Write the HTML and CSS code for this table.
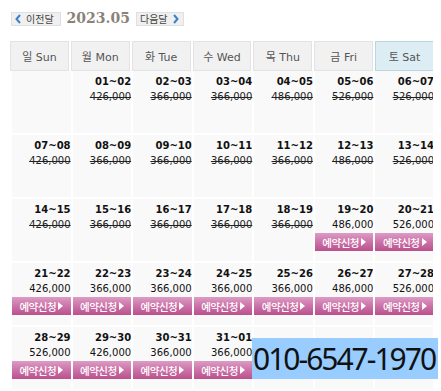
FILE: index.html
```html
<!DOCTYPE html>
<html lang="ko">
<head>
    <meta charset="UTF-8">
    <title>예약 달력</title>
    <link rel="stylesheet" href="styles.css">
</head>
<body>
    <div class="month-nav">
        <button class="nav-btn"><svg class="chev" viewBox="0 0 6 10" width="6" height="10"><polyline points="5,1 1.5,5 5,9"/></svg>이전달</button>
        <h2 class="month-title">2023.05</h2>
        <button class="nav-btn">다음달<svg class="chev" viewBox="0 0 6 10" width="6" height="10"><polyline points="1,1 4.5,5 1,9"/></svg></button>
    </div>

    <div class="week-head">
        <div class="day-name">일 Sun</div>
        <div class="day-name">월 Mon</div>
        <div class="day-name">화 Tue</div>
        <div class="day-name">수 Wed</div>
        <div class="day-name">목 Thu</div>
        <div class="day-name">금 Fri</div>
        <div class="day-name sat">토 Sat</div>
    </div>

    <div class="month-grid">
        <!-- week 1 -->
        <div class="day"></div>
        <div class="day"><span class="range">01~02</span><span class="price sold">426,000</span></div>
        <div class="day"><span class="range">02~03</span><span class="price sold">366,000</span></div>
        <div class="day"><span class="range">03~04</span><span class="price sold">366,000</span></div>
        <div class="day"><span class="range">04~05</span><span class="price sold">486,000</span></div>
        <div class="day"><span class="range">05~06</span><span class="price sold">526,000</span></div>
        <div class="day"><span class="range">06~07</span><span class="price sold">526,000</span></div>
        <!-- week 2 -->
        <div class="day"><span class="range">07~08</span><span class="price sold">426,000</span></div>
        <div class="day"><span class="range">08~09</span><span class="price sold">366,000</span></div>
        <div class="day"><span class="range">09~10</span><span class="price sold">366,000</span></div>
        <div class="day"><span class="range">10~11</span><span class="price sold">366,000</span></div>
        <div class="day"><span class="range">11~12</span><span class="price sold">366,000</span></div>
        <div class="day"><span class="range">12~13</span><span class="price sold">486,000</span></div>
        <div class="day"><span class="range">13~14</span><span class="price sold">526,000</span></div>
        <!-- week 3 -->
        <div class="day"><span class="range">14~15</span><span class="price sold">426,000</span></div>
        <div class="day"><span class="range">15~16</span><span class="price sold">366,000</span></div>
        <div class="day"><span class="range">16~17</span><span class="price sold">366,000</span></div>
        <div class="day"><span class="range">17~18</span><span class="price sold">366,000</span></div>
        <div class="day"><span class="range">18~19</span><span class="price sold">366,000</span></div>
        <div class="day"><span class="range">19~20</span><span class="price">486,000</span><a class="book-btn" href="#">예약신청<i class="arrow"></i></a></div>
        <div class="day"><span class="range">20~21</span><span class="price">526,000</span><a class="book-btn" href="#">예약신청<i class="arrow"></i></a></div>
        <!-- week 4 -->
        <div class="day"><span class="range">21~22</span><span class="price">426,000</span><a class="book-btn" href="#">예약신청<i class="arrow"></i></a></div>
        <div class="day"><span class="range">22~23</span><span class="price">366,000</span><a class="book-btn" href="#">예약신청<i class="arrow"></i></a></div>
        <div class="day"><span class="range">23~24</span><span class="price">366,000</span><a class="book-btn" href="#">예약신청<i class="arrow"></i></a></div>
        <div class="day"><span class="range">24~25</span><span class="price">366,000</span><a class="book-btn" href="#">예약신청<i class="arrow"></i></a></div>
        <div class="day"><span class="range">25~26</span><span class="price">366,000</span><a class="book-btn" href="#">예약신청<i class="arrow"></i></a></div>
        <div class="day"><span class="range">26~27</span><span class="price">486,000</span><a class="book-btn" href="#">예약신청<i class="arrow"></i></a></div>
        <div class="day"><span class="range">27~28</span><span class="price">526,000</span><a class="book-btn" href="#">예약신청<i class="arrow"></i></a></div>
        <!-- week 5 -->
        <div class="day"><span class="range">28~29</span><span class="price">526,000</span><a class="book-btn" href="#">예약신청<i class="arrow"></i></a></div>
        <div class="day"><span class="range">29~30</span><span class="price">426,000</span><a class="book-btn" href="#">예약신청<i class="arrow"></i></a></div>
        <div class="day"><span class="range">30~31</span><span class="price">366,000</span><a class="book-btn" href="#">예약신청<i class="arrow"></i></a></div>
        <div class="day"><span class="range">31~01</span><span class="price">366,000</span><a class="book-btn" href="#">예약신청<i class="arrow"></i></a></div>
        <div class="day"></div>
        <div class="day"></div>
        <div class="day"></div>
    </div>

    <div class="phone">010-6547-1970</div>
</body>
</html>
```

FILE: styles.css
```css
body {
    margin: 8px;
    font-family: "DejaVu Sans", "Noto Sans CJK KR", sans-serif;
    background: #fff;
    color: #111;
}
.month-nav {
    display: flex;
    align-items: center;
    gap: 6px;
    height: 22px;
    margin-left: 3px;
}
.nav-btn {
    display: flex;
    align-items: center;
    gap: 5px;
    height: 14px;
    padding: 0 6px 0 3px;
    margin: 0;
    border: 1px solid #e0e0e0;
    background: #f0f0f0;
    color: #444;
    font-family: "Noto Sans CJK KR", sans-serif;
    font-size: 10px;
    line-height: 12px;
    cursor: pointer;
}
.nav-btn:last-child {
    padding: 0 4px 0 3px;
}
.chev {
    fill: none;
    stroke: #3f7fcf;
    stroke-width: 2;
}
.month-title {
    margin: -2px 0 0;
    font-family: "DejaVu Serif", serif;
    font-size: 14px;
    font-weight: bold;
    color: #8a8276;
}
.week-head {
    display: grid;
    grid-template-columns: repeat(7, minmax(0, 1fr));
    gap: 2px;
    width: 424px;
    margin: 11px 0 0 2px;
}
.day-name {
    display: flex;
    align-items: center;
    justify-content: center;
    height: 30px;
    box-sizing: border-box;
    border: 1px solid #e3e3e3;
    background: #f1f1f1;
    color: #555;
    font-size: 11px;
}
.day-name.sat {
    background: #dcedf3;
    border-color: #b9d6e2;
}
.month-grid {
    display: grid;
    grid-template-columns: repeat(7, minmax(0, 1fr));
    grid-auto-rows: 62px;
    gap: 2px;
    width: 422px;
    margin-left: 4px;
}
.day {
    display: flex;
    flex-direction: column;
    align-items: flex-end;
    min-width: 0;
    padding-top: 4px;
    background: #f9f9f9;
}
.range {
    font-size: 10px;
    font-weight: bold;
    line-height: 14px;
}
.price {
    margin-top: 1px;
    font-size: 10px;
    line-height: 14px;
}
.price.sold {
    text-decoration: line-through;
    color: #222;
}
.book-btn {
    align-self: stretch;
    display: flex;
    align-items: center;
    justify-content: center;
    gap: 2px;
    height: 18px;
    margin-top: 1px;
    background: linear-gradient(#dc9cc4, #cc72a8 50%, #b9518d);
    color: #fff;
    font-family: "Noto Sans CJK KR", sans-serif;
    font-size: 10.5px;
    font-weight: 500;
    letter-spacing: -0.5px;
    text-decoration: none;
    white-space: nowrap;
}
.arrow {
    width: 0;
    height: 0;
    border-left: 5px solid #fff;
    border-top: 4px solid transparent;
    border-bottom: 4px solid transparent;
}
.phone {
    position: absolute;
    left: 252px;
    top: 338px;
    width: 186px;
    height: 41px;
    padding-left: 1px;
    box-sizing: border-box;
    background: #99ccff;
    color: #111;
    font-family: "Noto Sans", sans-serif;
    font-size: 30px;
    line-height: 41px;
    letter-spacing: -2px;
    white-space: nowrap;
}
```
